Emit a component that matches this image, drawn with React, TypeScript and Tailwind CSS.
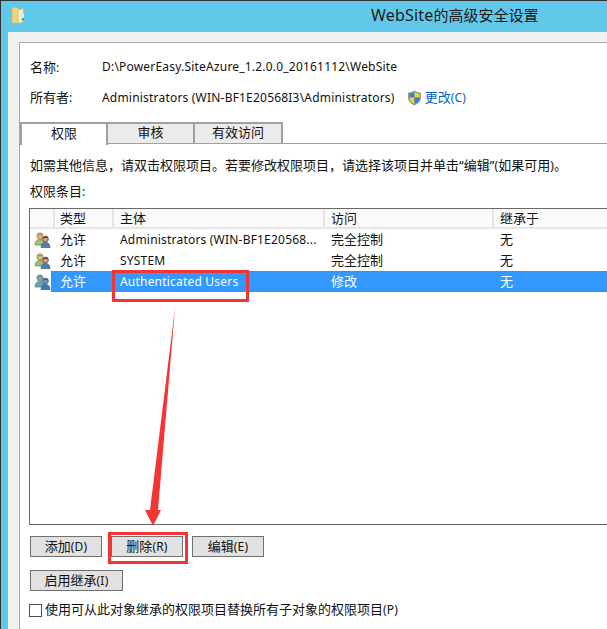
const uiFont = "font-['Noto_Sans','Noto_Sans_CJK_SC',sans-serif]";

const rows = [
  { type: "允许", who: "Administrators (WIN-BF1E20568...", access: "完全控制", from: "无" },
  { type: "允许", who: "SYSTEM", access: "完全控制", from: "无" },
  { type: "允许", who: "Authenticated Users", access: "修改", from: "无", selected: true },
];

// Les caractères chinois sont en 13px, le latin en 12px
function Mixed({ text }: { text: string }) {
  const parts = text.split(/([\u3000-\u9fff\uff00-\uffef]+)/).filter(Boolean);
  return (
    <>
      {parts.map((part, i) =>
        /[\u3000-\u9fff\uff00-\uffef]/.test(part) ? (
          <span key={i} className="text-[13px]">{part}</span>
        ) : (
          <span key={i} className="text-[12px] tracking-[0.2px]">{part}</span>
        )
      )}
    </>
  );
}

function FolderIcon() {
  return (
    <svg width="14" height="17" viewBox="0 0 14 17" className="mt-[6px] ml-[10px]">
      <path d="M1 .5h5.500l1 1.500v14H1z" fill="#e9d684" stroke="#cdb765" strokeWidth="0.6" />
      <path d="M7 3l5.500-1.500v13.500L7 16.500z" fill="#f6ecb4" stroke="#cdb765" strokeWidth="0.6" />
      <rect x="10.800" y="7" width="2.200" height="5" fill="#e8e8e8" />
      <rect x="10.800" y="11" width="2.200" height="2.500" fill="#3d9bd8" />
    </svg>
  );
}

function ShieldIcon() {
  return (
    <svg width="15" height="16" viewBox="0 0 15 16" className="shrink-0">
      <path d="M7.500.5C5.500 2 3 2.600 1 2.600v5.200c0 3.600 3 6 6.500 7.700C11 13.800 14 11.400 14 7.800V2.600C12 2.600 9.500 2 7.500.5z" fill="#8b98a3" />
      <path d="M7.500 2v5.500H2.500V3.800C4.200 3.700 6 3.100 7.500 2z" fill="#2f7fd6" />
      <path d="M7.500 2c1.500 1.100 3.300 1.700 5 1.800v3.700h-5z" fill="#f7d322" />
      <path d="M2.500 7.500h5V14c-2.700-1.400-5-3.300-5-6.200z" fill="#f7d322" />
      <path d="M7.500 7.500h5v.3c0 2.900-2.300 4.800-5 6.200z" fill="#2f7fd6" />
    </svg>
  );
}

function UsersIcon({ selected }: { selected?: boolean }) {
  const skinBack = selected ? "#7fa6c4" : "#d9bb80";
  const bodyBack = selected ? "#6d9dbb" : "#a3bf72";
  const skinFront = selected ? "#6f94b4" : "#cfa583";
  const hairFront = selected ? "#38607f" : "#4a3a30";
  const bodyFront = selected ? "#2f7cb0" : "#4f7ea8";
  return (
    <svg width="17" height="16" viewBox="0 0 17 16">
      <circle cx="6" cy="4" r="3.200" fill={skinBack} stroke="#8c8a55" strokeWidth="0.7" />
      <path d="M3 3.500c.5-2.500 5-3 6 0-1.500-.8-4.500-.8-6 0z" fill={selected ? "#5f8fae" : "#b99a50"} />
      <path d="M1 13c0-3.500 1.500-5.500 5-5.500s5 2 5 5.500z" fill={bodyBack} stroke="#6f8a58" strokeWidth="0.7" />
      <circle cx="11.500" cy="7" r="2.900" fill={skinFront} stroke={hairFront} strokeWidth="0.7" />
      <path d="M8.700 6.500c.3-2.800 5.300-2.800 5.600 0-1.700-.9-3.900-.9-5.600 0z" fill={hairFront} />
      <path d="M7 15.500c0-3 1.500-5 4.500-5s4.500 2 4.500 5z" fill={bodyFront} stroke="#3a5f82" strokeWidth="0.7" />
    </svg>
  );
}

function Tab({ label, active, width }: { label: string; active?: boolean; width: string }) {
  return (
    <div
      className={`${width} h-[22px] pb-[2px] flex items-center justify-center border-t-2 border-r-2 border-[#a0a0a0] text-[13px] ${
        active ? "bg-white border-l-2 relative -mb-px h-[23px]" : "bg-[#ebebeb] border-b"
      }`}
    >
      {label}
    </div>
  );
}

function WinButton({ children, width }: { children: string; width: string }) {
  return (
    <div className={`${width} h-[21px] flex items-center justify-center bg-[#e1e1e1] border border-[#707070]`}>
      <span><Mixed text={children} /></span>
    </div>
  );
}

export default function App() {
  return (
    <div className={`relative w-[607px] h-[629px] overflow-hidden bg-[#62c8ea] border-t border-l border-[#333333] text-[#111] ${uiFont}`}>
      {/* Barre de titre */}
      <div className="h-[30px] flex relative">
        <FolderIcon />
        <div className="absolute left-[370px] top-[3px] leading-[22px] whitespace-nowrap text-[#1a1a1a]">
          <span className="text-[16px] tracking-[0.2px]">WebSite</span>
          <span className="text-[15px]">的高级安全设置</span>
        </div>
      </div>

      {/* Zone cliente */}
      <div className="ml-[7px] h-[598px] bg-[#f0f0f0] border-t border-[#8fb8c8] pt-[10px] pl-[11px]">
        <div className="h-[588px] bg-white border-t border-l border-[#a8a8a8] text-[12px]">
          <div className="flex pl-[10px] pt-[14px] h-[20px] box-content leading-[20px]">
            <span className="w-[72px]"><Mixed text="名称:" /></span>
            <span><Mixed text="D:\PowerEasy.SiteAzure_1.2.0.0_20161112\WebSite" /></span>
          </div>
          <div className="flex items-center pl-[10px] mt-[11px] h-[20px]">
            <span className="w-[72px]"><Mixed text="所有者:" /></span>
            <span><Mixed text="Administrators (WIN-BF1E20568I3\Administrators)" /></span>
            <span className="ml-[12px] mr-[3px] flex"><ShieldIcon /></span>
            <span className="text-[#0066cc]"><Mixed text="更改(C)" /></span>
          </div>

          {/* Onglets */}
          <div className="flex mt-[14px] border-b border-[#a0a0a0] h-[22px]">
            <Tab label="权限" active width="w-[88px]" />
            <Tab label="审核" width="w-[87px]" />
            <Tab label="有效访问" width="w-[88px]" />
          </div>

          <div className="pl-[10px] pt-[11px] leading-[20px] whitespace-nowrap">
            <Mixed text={"如需其他信息\uFF0C请双击权限项目。若要修改权限项目\uFF0C请选择该项目并单击"} />
            <span className="text-[13px]">{"\u201C"}</span>
            <Mixed text="编辑" />
            <span className="text-[13px]">{"\u201D"}</span>
            <Mixed text="(如果可用)。" />
          </div>
          <div className="pl-[10px] mt-[5px] leading-[20px]"><Mixed text="权限条目:" /></div>

          {/* Liste */}
          <div className="ml-[9px] mt-[6px] h-[317px] border-t border-l border-b border-[#696969]">
            <div className="flex h-[20px] bg-[#fafafa] border-b-2 border-[#e5e5e5] items-center">
              <div className="w-[25px] h-full border-r-2 border-[#e5e5e5]" />
              <div className="w-[59px] h-full pl-[5px] border-r-2 border-[#e5e5e5] leading-[19px]"><Mixed text="类型" /></div>
              <div className="w-[211px] h-full pl-[6px] border-r-2 border-[#e5e5e5] leading-[19px]"><Mixed text="主体" /></div>
              <div className="w-[169px] h-full pl-[6px] border-r-2 border-[#e5e5e5] leading-[19px]"><Mixed text="访问" /></div>
              <div className="flex-1 h-full pl-[6px] leading-[19px]"><Mixed text="继承于" /></div>
            </div>
            {rows.map((row) => (
              <div key={row.who} className="flex h-[21px] items-center">
                <div className="w-[21px] pl-[4px] shrink-0 flex"><UsersIcon selected={row.selected} /></div>
                <div className={`flex flex-1 h-full items-center ${row.selected ? "bg-[#3399ff] text-white border-y border-dotted border-[#b0702a]" : ""}`}>
                  <div className="w-[63px] pl-[9px]"><Mixed text={row.type} /></div>
                  <div className="w-[211px] pl-[6px] whitespace-nowrap"><Mixed text={row.who} /></div>
                  <div className="w-[169px] pl-[6px]"><Mixed text={row.access} /></div>
                  <div className="pl-[6px]"><Mixed text={row.from} /></div>
                </div>
              </div>
            ))}
          </div>

          {/* Boutons */}
          <div className="flex gap-[9px] ml-[10px] mt-[11px]">
            <WinButton width="w-[72px]">添加(D)</WinButton>
            <WinButton width="w-[72px]">删除(R)</WinButton>
            <WinButton width="w-[72px]">编辑(E)</WinButton>
          </div>
          <div className="ml-[10px] mt-[13px]">
            <WinButton width="w-[93px]">启用继承(I)</WinButton>
          </div>
          <div className="flex items-center ml-[9px] mt-[9px] h-[20px]">
            <div className="w-[13px] h-[13px] mt-[1px] bg-white border border-[#505050]" />
            <span className="ml-[3px]"><Mixed text="使用可从此对象继承的权限项目替换所有子对象的权限项目(P)" /></span>
          </div>
        </div>
      </div>

      {/* Annotations rouges */}
      <div className="absolute left-[111px] top-[269px] w-[137px] h-[32px] border-[3px] border-[#f33535]" />
      <div className="absolute left-[107px] top-[531px] w-[80px] h-[32px] border-[3px] border-[#f33535]" />
      <svg className="absolute left-[139px] top-[304px]" width="40" height="222" viewBox="0 0 40 222">
        <path d="M35 3 L18 205 L21 205 L13 221 L5 205 L10 205 Z" fill="#f33535" />
      </svg>
    </div>
  );
}
